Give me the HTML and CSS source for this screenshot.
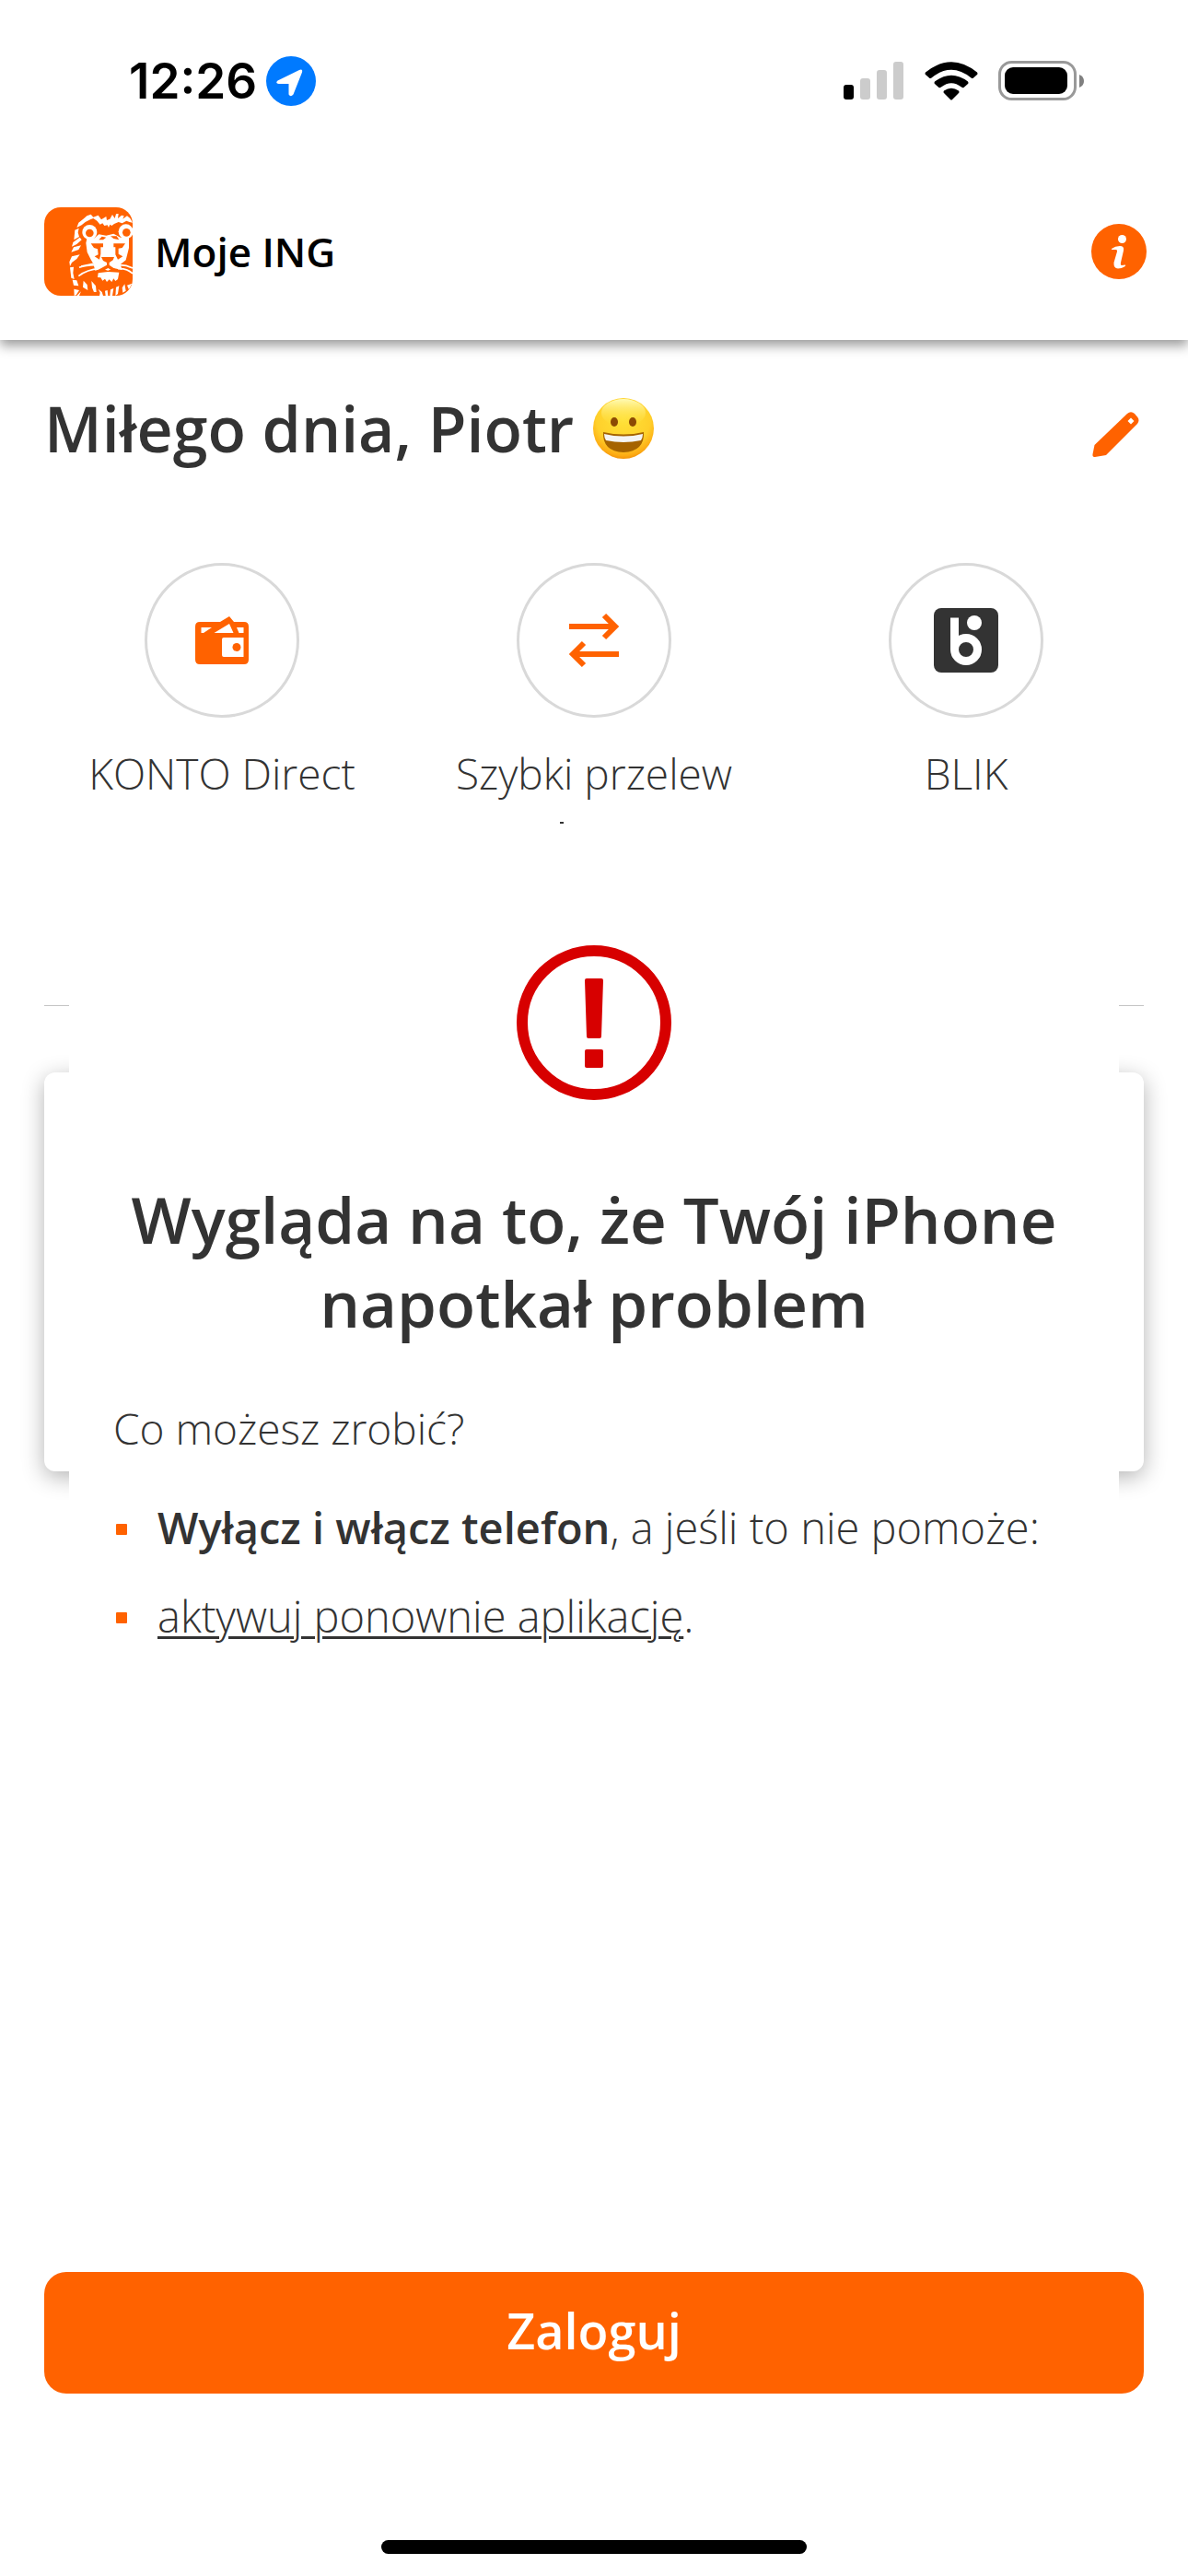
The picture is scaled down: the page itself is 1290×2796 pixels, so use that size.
FILE: index.html
```html
<!DOCTYPE html>
<html lang="pl">
<head>
<meta charset="utf-8">
<meta name="viewport" content="width=device-width, initial-scale=1">
<title>Moje ING</title>
<link rel="stylesheet" href="styles.css">
</head>
<body>
<div class="status-bar">
  <div class="status-group status-time">
    <span>12:26</span>
    <svg width="54" height="54" viewBox="0 0 54 54" aria-hidden="true"><circle cx="27" cy="27" r="27" fill="#007aff"/><path d="M12.500 26.500L36 15Q40 13.500 39 17.500L29.500 41.500Q26.500 45 24.500 41.500V30H13.500Q9.500 29 12.500 26.500Z" fill="#fff"/></svg>
  </div>
  <div class="status-group status-signals">
    <svg width="66" height="42" viewBox="0 0 66 42" aria-hidden="true"><rect y="25" width="11" height="16" rx="3"/><g fill="#ccc"><rect x="18" y="18" width="11" height="23" rx="3"/><rect x="36" y="9" width="11" height="32" rx="3"/><rect x="54" width="11" height="41" rx="3"/></g></svg>
    <svg width="58" height="42" viewBox="0 0 58 42" aria-hidden="true"><path d="M1 11.500Q29-11 57 11.500Q58 13 57 14L53 17.500Q52 18.500 50.500 17.500Q29 0 7.500 17.500Q6 18.500 5 17.500L1 14Q0 13 1 11.500ZM11 21.500Q29 8 47 21.500Q48 23 47 24L42.500 28Q41.500 28.500 40 27.500Q29 19 18 27.500Q16.500 28.500 15.500 28L11 24Q10 23 11 21.500ZM21 31.500Q29 26 37 31.500Q38 33 37 34L30 41Q29 42 28 41L21 34Q20 33 21 31.500Z"/></svg>
    <svg width="94" height="44" viewBox="0 0 94 44" aria-hidden="true"><rect x="1.500" y="1.500" width="82" height="40" rx="13" fill="none" stroke="#999" stroke-width="3"/><rect x="7" y="7" width="68" height="29" rx="9"/><path d="M88 15Q93 17 93 22T88 29Z" fill="#808080"/></svg>
  </div>
</div>

<header class="app-header">
  <svg class="logo" width="96" height="96" viewBox="36 36 288 288" aria-hidden="true">
    <rect x="36" y="36" width="288" height="288" fill="#ff6200"/>
    <g fill="#fff">
      <path d="M142 102L148 86L165 73L175 64L188 59L196 68L212 62L222 76L238 66L240 78L250 74L258 60L266 72L270 58L278 57L276 72L288 62L296 64L292 74L306 64L316 72L324 86L314 84L304 80L290 88L278 84L264 90L256 96L250 92L246 102L242 94L232 96L226 88L218 92L208 80L196 72L186 76L170 84L158 94Z"/>
      <path d="M136 110L149 104L146 118L150 132L133 142ZM130 150L152 134L158 142L142 156L126 164ZM124 182L132 166L156 160L148 174ZM118 214L126 196L152 190L142 204L126 216L120 228ZM120 232L132 230L130 250L134 270L124 266ZM128 272L142 274L148 292L132 290ZM133 302L150 306L140 322L134 324ZM142 324L156 310L150 324Z"/>
      <path d="M164 275L176 288L178 306L162 296ZM190 276L204 292L206 312L198 312L192 298ZM212 302L224 312L228 324L216 324L218 314ZM234 308L242 306L244 324H236ZM252 304L262 300L258 324H250ZM270 296L280 292L276 318L268 324ZM290 298L298 286L302 308L292 314ZM306 290L322 284L312 304Z"/>
      <path d="M176 134L200 136L214 124L238 128L262 122L284 134L312 134L312 168L306 192L302 208L284 222L290 240L262 234L244 242L224 236L202 242L196 220L188 206L176 182L172 152Z"/>
      <path d="M212 250L244 246L280 248L276 270L268 276L262 268L256 279L248 271L240 279L234 269L226 275L220 265L210 264Z"/>
      <circle cx="184" cy="117" r="24"/><circle cx="302" cy="115" r="24"/>
    </g>
    <g fill="none" stroke="#fff" stroke-width="5"><path d="M150 232Q176 222 212 224M148 260Q176 238 216 236M276 224Q300 222 324 234M276 236Q306 234 324 252M196 220L156 228"/></g>
    <g fill="#ff6200">
      <circle cx="184" cy="120" r="13"/><circle cx="304" cy="118" r="13"/>
      <path d="M214 142L224 131L238 134L228 142ZM252 130L272 130L280 142L262 138ZM188 154H228V166H220V188L216 206L200 196L212 190L210 172L198 168ZM262 154H300L290 168L278 170V188L292 196L276 206L268 190V166H262ZM222 198H264L260 208L248 216V224L268 238L258 242L244 234L226 244L204 244L240 224V216L228 210Z"/>
    </g>
  </svg>
  <span class="app-name">Moje ING</span>
  <button class="icon-button" type="button" aria-label="Informacje">
    <svg width="60" height="60" viewBox="0 0 60 60" aria-hidden="true"><circle cx="30" cy="30" r="30" fill="#ff6200"/><circle cx="33.500" cy="16.500" r="4.500" fill="#fff"/><path d="M22 27Q26 24 31 24Q36 24 35 29L32 42Q31.500 45 33 45L37 44.500Q38 45 36 46.500Q33 48.500 29 48.500Q24 48 24.500 42L28 30Q28.500 27.500 26 28L22.500 28Q21.500 27.500 22 27Z" fill="#fff"/></svg>
  </button>
</header>

<main class="screen">
  <div class="home">
    <div class="greeting">
      <h1 class="greeting-text">Miłego dnia, Piotr</h1>
      <svg class="emoji" width="68" height="68" viewBox="0 0 68 68" role="img" aria-label="Uśmiech">
        <defs><radialGradient id="face" cx=".5" cy=".35" r=".68"><stop offset="0" stop-color="#ffe137"/><stop offset=".65" stop-color="#ffd02b"/><stop offset=".88" stop-color="#fdab13"/><stop offset="1" stop-color="#ed8607"/></radialGradient><linearGradient id="shine" x2="0" y2="1"><stop offset="0" stop-color="#fffbb5"/><stop offset="1" stop-color="#ffe137" stop-opacity="0"/></linearGradient></defs>
        <circle cx="34" cy="34" r="33" fill="url(#face)"/><ellipse cx="34" cy="17" rx="24" ry="15" fill="url(#shine)"/>
        <ellipse cx="24" cy="27" rx="4" ry="5" fill="#8c4a04"/><ellipse cx="44" cy="27" rx="4" ry="5" fill="#8c4a04"/>
        <path d="M12 38Q34 43 56 38Q57 59 34 60Q11 59 12 38Z" fill="#a56300"/><path d="M13 40Q34 45 55 40Q55 44 53 47Q34 51 15 47Q13 44 13 40Z" fill="#f4f4f4"/>
      </svg>
      <button class="icon-button" type="button" aria-label="Edytuj">
        <svg width="60" height="66" viewBox="0 -2 60 66" aria-hidden="true"><path d="M39 15Q43 11.500 47 15L50 18.500Q53 22 50 26L16 60L4 62Q1 62.500 1.500 59L3.500 49Z" fill="#ff6200"/><path d="M43 19.500L46.500 23L43 26.500L39.500 23Z" fill="#fff"/></svg>
      </button>
    </div>

    <nav class="actions">
      <a class="action" href="#konto">
        <span class="action-circle"><svg width="58" height="52" viewBox="0 0 58 52" aria-hidden="true"><path d="M5 6H27L37 0L42 6H53Q58 6 58 11V47Q58 52 53 52H5Q0 52 0 47V11Q0 6 5 6Z" fill="#ff6200"/><g fill="#fff"><path d="M6.500 12H18L9 18H6.500ZM20.500 18L37 8L41.500 18ZM45 12H52.500V18H47.500ZM31 23H52.500V44H31Q29 44 29 42V25Q29 23 31 23Z"/></g><circle cx="45" cy="33.500" r="4.500" fill="#ff6200"/></svg></span>
        <span class="action-label">KONTO Direct</span>
      </a>
      <a class="action action-clipped" href="#przelew">
        <span class="action-circle"><svg width="56" height="60" viewBox="0 0 56 60" fill="none" stroke="#ff6200" stroke-width="6" aria-hidden="true"><path d="M1 15H51M39 3L51 15L39 27M55 45H5M17 33L5 45L17 57"/></svg></span>
        <span class="action-label">Szybki przelew</span>
      </a>
      <a class="action" href="#blik">
        <span class="action-circle"><svg width="70" height="70" viewBox="0 0 70 70" aria-hidden="true"><rect width="70" height="70" rx="8" fill="#333"/><path d="M22.500 10.500V45" stroke="#fff" stroke-width="9"/><circle cx="35" cy="45" r="12.500" fill="none" stroke="#fff" stroke-width="9"/><circle cx="44" cy="16" r="8" fill="#fff"/></svg></span>
        <span class="action-label">BLIK</span>
      </a>
    </nav>
    <hr class="divider">
    <div class="card"></div>
  </div>

  <section class="alert" role="alertdialog" aria-labelledby="alert-title">
    <svg class="alert-icon" width="168" height="168" viewBox="0 0 168 168" aria-hidden="true"><circle cx="84" cy="84" r="78" fill="none" stroke="#d70000" stroke-width="12"/><path d="M76 36H92Q94 36 94 38L92 99Q92 101 90 101H78Q76 101 76 99L74 38Q74 36 76 36Z" fill="#d70000"/><rect x="74" y="113" width="20" height="20" rx="2" fill="#d70000"/></svg>
    <h2 class="alert-title" id="alert-title">Wygląda na to, że Twój iPhone napotkał problem</h2>
    <p class="alert-question">Co możesz zrobić?</p>
    <ul class="steps">
      <li><strong>Wyłącz i włącz telefon</strong>, a jeśli to nie pomoże:</li>
      <li><a class="step-link" href="#aktywuj">aktywuj ponownie aplikację</a>.</li>
    </ul>
  </section>
</main>

<footer class="footer">
  <button class="login" type="button">Zaloguj</button>
  <div class="home-indicator"></div>
</footer>
</body>
</html>
```
FILE: styles.css
```css
* {
  box-sizing: border-box;
}

body {
  display: flex;
  flex-direction: column;
  min-height: 100vh;
  margin: 0;
  background: #fff;
  color: #333;
  font-family: "Open Sans", "Noto Sans", sans-serif;
  font-size: 46px;
  font-weight: 350;
  line-height: 72px;
}

svg {
  display: block;
  flex: none;
}

button {
  padding: 0;
  border: 0;
  background: none;
  font-family: inherit;
  cursor: pointer;
}

a {
  color: inherit;
}

/* System status bar */
.status-bar {
  position: relative;
  z-index: 2;
  display: flex;
  justify-content: space-between;
  align-items: center;
  height: 177px;
  padding: 0 112px 2px 140px;
  background: #fff;
  color: #000;
}

.status-group {
  display: flex;
  align-items: center;
}

.status-time {
  gap: 10px;
  font-family: Inter, sans-serif;
  font-size: 53px;
  font-weight: 600;
}

.status-signals {
  gap: 22px;
}

/* Application header */
.app-header {
  position: relative;
  z-index: 1;
  display: flex;
  align-items: center;
  gap: 24px;
  padding: 48px 45px 48px 48px;
  background: #fff;
  box-shadow: 0 6px 12px rgba(0, 0, 0, 0.4);
}

.logo {
  border-radius: 18px;
}

.app-name {
  color: #000;
  font-size: 44px;
  font-weight: 600;
}

.icon-button {
  margin-left: auto;
}

/* The home view and the alert share one grid cell */
.screen {
  display: grid;
  align-items: start;
  margin-bottom: auto;
}

.home,
.alert {
  grid-area: 1 / 1;
}

.home {
  padding-top: 48px;
}

.greeting {
  display: flex;
  align-items: center;
  gap: 20px;
  padding: 0 45px 0 48px;
}

.greeting-text,
.alert-title {
  margin: 0;
  font-size: 69px;
  font-weight: 600;
  line-height: 91px;
}

.greeting-text {
  font-size: 68px;
  line-height: 96px;
}

.actions {
  display: grid;
  grid-template-columns: repeat(3, 1fr);
  padding: 98px 39px 0;
}

.action {
  position: relative;
  display: flex;
  flex-direction: column;
  align-items: center;
  gap: 24px;
  text-decoration: none;
}

.action-circle {
  display: grid;
  place-items: center;
  width: 168px;
  height: 168px;
  border: 3px solid #d9d9d9;
  border-radius: 50%;
}

/* Tip of the label's hidden second line */
.action-clipped::after {
  content: "";
  position: absolute;
  top: 281px;
  left: calc(50% - 37px);
  width: 4px;
  height: 2px;
  background: #333;
}

.divider {
  height: 1px;
  margin: 216px 48px 72px;
  border: 0;
  background: #c4c4c4;
}

.card {
  min-height: 433px;
  margin: 0 48px;
  border-radius: 12px;
  background: #fff;
  box-shadow: 0 6px 24px rgba(0, 0, 0, 0.3);
}

.alert {
  display: flex;
  flex-direction: column;
  z-index: 1;
  margin: 525px 75px 0;
  padding: 132px 48px 0;
  background: #fff;
}

.alert-icon {
  align-self: center;
}

.alert-title {
  padding-top: 84px;
  text-align: center;
}

.alert-question {
  margin: 54px 0 36px;
}

.steps {
  display: flex;
  flex-direction: column;
  gap: 24px;
  margin: 0;
  padding: 0;
  font-size: 47px;
  list-style: none;
}

.steps li {
  position: relative;
  padding-left: 48px;
}

.steps li::before {
  content: "";
  position: absolute;
  top: 32px;
  left: 3px;
  width: 12px;
  height: 12px;
  border-radius: 1px;
  background: #ff6200;
}

.steps strong {
  font-weight: 650;
}

.step-link {
  text-decoration-thickness: 3px;
  text-underline-offset: 4px;
}

.footer {
  display: flex;
  flex-direction: column;
  gap: 159px;
  padding: 0 48px 24px;
}

.login {
  height: 132px;
  padding-bottom: 6px;
  border-radius: 24px;
  background: #ff6200;
  color: #fff;
  font-size: 54px;
  font-weight: 600;
}

.home-indicator {
  align-self: center;
  width: 462px;
  height: 15px;
  border-radius: 8px;
  background: #000;
}
```
